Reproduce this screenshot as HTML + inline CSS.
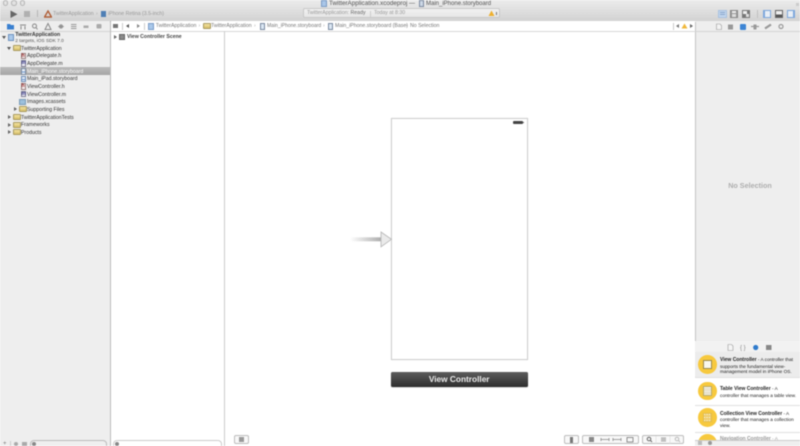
<!DOCTYPE html>
<html><head><meta charset="utf-8"><style>
*{box-sizing:border-box}
html,body{margin:0;padding:0;width:800px;height:446px;overflow:hidden;background:#fff}
#r{position:relative;width:800px;height:446px;overflow:hidden;filter:blur(.45px);font-family:"Liberation Sans",sans-serif;color:#333}
#r div{position:absolute;white-space:nowrap}
.t{font-size:5.2px;line-height:7px;color:#333}
.f{width:7.5px;height:6px;background:linear-gradient(#f3e3a0,#d9c06a);border:.5px solid #a89a60;border-radius:1px}
.d{width:5px;height:6.5px;background:#e8eef6;border:.5px solid #7a8aa0;font-size:5px;line-height:5px;text-align:center;font-weight:bold}
.tr{width:0;height:0;border-left:3px solid #666;border-top:2px solid transparent;border-bottom:2px solid transparent}
.tb{width:0;height:0;border-top:3px solid #555;border-left:2px solid transparent;border-right:2px solid transparent}
.lt{width:5.5px;height:5.5px;border-radius:50%;background:#e2e2e2;border:.6px solid #b5b5b5}
.btn{border:.8px solid #bdbdbd;border-radius:2px;background:#f8f8f8;height:9px;top:435px}
.v{width:.7px;background:#ccc}
.h{height:.7px;background:#e0e0e0}
.circ{border-radius:50%;background:#f7c93e}
.sq{background:#f4f1e4;border:.5px solid #b9ab6a}
.j{top:23px;color:#777}
.l{left:720px;font-size:4.7px;line-height:5.5px;color:#222}
.l b{font-size:5px}
</style></head><body><div id="r">
<!-- toolbar -->
<div style="left:0;top:0;width:800px;height:21px;background:linear-gradient(#ececec,#d2d2d2)"></div>
<div style="left:0;top:20.700px;width:800px;height:.7px;background:#aaa"></div>
<div class="lt" style="left:2.500px;top:0"></div><div class="lt" style="left:11px;top:0"></div><div class="lt" style="left:19.500px;top:0"></div>
<div style="left:796px;top:3px;width:3px;height:3px;background:#ccc"></div>
<svg style="position:absolute;left:9.500px;top:9.500px" width="9" height="9"><path d="M.5 .5L7.500 4.200L.5 8Z" fill="#666"/></svg>
<div style="left:24px;top:11px;width:6px;height:6px;background:#b0b0b0"></div>
<div class="v" style="left:37px;top:10px;height:7px;background:#b5b5b5"></div>
<svg style="position:absolute;left:44px;top:9.500px" width="8" height="8"><path d="M4 1L7.500 7H.5Z" fill="none" stroke="#b0603a" stroke-width="1.400"/></svg>
<div class="t" style="left:53px;top:11px;color:#999">TwitterApplication</div>
<div class="t" style="left:96px;top:11px;color:#aaa">›</div>
<div style="left:100.500px;top:11px;width:5.500px;height:6px;background:#4f7fb5"></div>
<div class="t" style="left:108px;top:11px;color:#999">iPhone Retina (3.5-inch)</div>
<!-- title -->
<div style="left:321px;top:0;width:6px;height:6.500px;background:#a9c6e8;border:.5px solid #7c9cc4"></div>
<div class="t" style="left:329px;top:0;color:#555;font-size:6.300px">TwitterApplication.xcodeproj</div>
<div class="t" style="left:409px;top:1px;color:#555;font-size:6px">—</div>
<div style="left:419px;top:0;width:4.500px;height:6.500px;background:#cdd8e6;border:.5px solid #7d8ba0"></div>
<div class="t" style="left:426px;top:1px;color:#555;font-size:6px">Main_iPhone.storyboard</div>
<!-- status -->
<div style="left:303px;top:8px;width:197px;height:10px;background:linear-gradient(#f1f1f1,#e6e6e6);border:.7px solid #c8c8c8;border-radius:2px"></div>
<div class="t" style="left:307px;top:10px;font-size:5.200px;color:#999">TwitterApplication: <span style="color:#666">Ready</span></div>
<div class="v" style="left:370px;top:10.500px;height:6px"></div>
<div class="t" style="left:374px;top:10px;font-size:5.200px;color:#999">Today at 8:30</div>
<svg style="position:absolute;left:488px;top:10px" width="10" height="7"><path d="M3.500 .5L6.500 6H.5Z" fill="#eeb030"/><rect x="8" y="2" width="1" height="3" fill="#777"/></svg>
<!-- right toolbar buttons -->
<div style="left:718.300px;top:10px;width:8.500px;height:7.500px;background:#c2d6ee;border:.5px solid #a9c2e0"></div>
<div style="left:720px;top:12px;width:5px;height:.6px;background:#89a6cc"></div><div style="left:720px;top:14px;width:5px;height:.6px;background:#89a6cc"></div>
<div style="left:730px;top:10px;width:8px;height:7.500px;background:#999;border:.5px solid #888"></div>
<div style="left:732px;top:11px;width:4px;height:2px;background:#eee"></div><div style="left:732px;top:14px;width:4px;height:2.500px;background:#ddd"></div>
<div style="left:742px;top:10px;width:8px;height:7.500px;background:#777"></div>
<div style="left:743px;top:11px;width:4px;height:2.500px;background:#eee"></div><div style="left:745.500px;top:14px;width:3.500px;height:2.500px;background:#ddd"></div>
<div class="v" style="left:756.500px;top:10px;height:7.500px;background:#c0c0c0"></div>
<div style="left:763px;top:10px;width:8px;height:7.500px;background:#e8eef6;border:.7px solid #7ea8dc;border-left-width:2.500px"></div>
<div style="left:775px;top:10px;width:8px;height:7.500px;background:linear-gradient(#eee 55%,#555 55%);border:.7px solid #666"></div>
<div style="left:786.700px;top:10px;width:8px;height:7.500px;background:#e8eef6;border:.7px solid #7ea8dc;border-right-width:2.500px"></div>
<!-- left sidebar -->
<div style="left:0;top:21.400px;width:110px;height:425px;background:#eeeeee"></div>
<div style="left:109.500px;top:22px;width:.8px;height:424px;background:#bbb"></div>
<div style="left:0;top:30.500px;width:110px;height:.7px;background:#d4d4d4"></div>
<svg style="position:absolute;left:6px;top:21.500px" width="100" height="9"><path d="M1 2H4L5 3H8V7.500H1Z" fill="#3a80d0"/><path d="M14 2.500H20V3.500H14ZM14.500 4H15.500V7.500H14.500ZM18.500 4H19.500V7.500H18.500Z" fill="#888"/><circle cx="28.500" cy="4" r="2" fill="none" stroke="#888"/><path d="M30 5.500L31.500 7.500" stroke="#888"/><path d="M42 1.500L45 7.500H39Z" fill="none" stroke="#888"/><circle cx="55" cy="4.500" r="2.200" fill="#999"/><path d="M52 4.500H58" stroke="#888" stroke-width=".6"/><path d="M65 2.500H70.500M65 4.500H70.500M65 6.500H70.500" stroke="#999" stroke-width=".9"/><rect x="77.500" y="3.500" width="5" height="2.500" fill="#aaa"/><rect x="90.500" y="2" width="5" height="4.500" rx="1" fill="#aaa"/></svg>
<!-- tree -->
<div class="tb" style="left:1.500px;top:36px"></div>
<div style="left:8px;top:33.500px;width:5.500px;height:7.500px;background:#a9c8ea;border:.5px solid #6f93c0"></div>
<div class="t" style="left:15.300px;top:31.800px;font-weight:bold;color:#333">TwitterApplication</div>
<div class="t" style="left:15.300px;top:37.500px;font-size:4.800px;color:#555">2 targets, iOS SDK 7.0</div>
<div class="tb" style="left:7px;top:46.500px"></div>
<div class="f" style="left:13.300px;top:45px"></div><div class="t" style="left:21px;top:45.500px">TwitterApplication</div>
<div class="d" style="left:20.500px;top:52.700px;background:#f5eeee;border-color:#9a8080;color:#9a3030">h</div><div class="t" style="left:27px;top:53.200px">AppDelegate.h</div>
<div class="d" style="left:20.500px;top:60.300px;background:#eeeef5;border-color:#808098;color:#303080">m</div><div class="t" style="left:27px;top:60.800px">AppDelegate.m</div>
<div style="left:0;top:67.300px;width:109.500px;height:7.700px;background:linear-gradient(#bbb,#a6a6a6)"></div>
<div class="d" style="left:20.500px;top:68px;background:linear-gradient(#e4ecf6 45%,#6f9ad0 45%,#6f9ad0 70%,#e4ecf6 70%)"></div><div class="t" style="left:27px;top:68.500px;color:#fff">Main_iPhone.storyboard</div>
<div class="d" style="left:20.500px;top:75.500px;background:linear-gradient(#e4ecf6 45%,#6f9ad0 45%,#6f9ad0 70%,#e4ecf6 70%);border-color:#6f8fb8"></div><div class="t" style="left:27px;top:76.200px">Main_iPad.storyboard</div>
<div class="d" style="left:20.500px;top:83.200px;background:#f5eeee;border-color:#9a8080;color:#9a3030">h</div><div class="t" style="left:27px;top:83.800px">ViewController.h</div>
<div class="d" style="left:20.500px;top:90.800px;background:#eeeef5;border-color:#808098;color:#303080">m</div><div class="t" style="left:27px;top:91.500px">ViewController.m</div>
<div style="left:19px;top:98.500px;width:7px;height:6.500px;background:#9cc0dc;border:.5px solid #7a9cb8"></div><div class="t" style="left:27px;top:99.200px">Images.xcassets</div>
<div class="tr" style="left:14px;top:107.300px"></div>
<div class="f" style="left:19px;top:106.300px"></div><div class="t" style="left:27px;top:106.800px">Supporting Files</div>
<div class="tr" style="left:8px;top:115px"></div>
<div class="f" style="left:13.300px;top:114px"></div><div class="t" style="left:21px;top:114.500px">TwitterApplicationTests</div>
<div class="tr" style="left:8px;top:122.700px"></div>
<div class="f" style="left:13.300px;top:121.700px"></div><div class="t" style="left:21px;top:122.200px">Frameworks</div>
<div class="tr" style="left:8px;top:130.300px"></div>
<div class="f" style="left:13.300px;top:129.300px"></div><div class="t" style="left:21px;top:129.800px">Products</div>
<!-- sidebar bottom -->
<div class="t" style="left:3px;top:440.500px;color:#777;font-size:6px">+</div>
<div class="v" style="left:10px;top:441px;height:5px"></div>
<div style="left:13.500px;top:441.500px;width:4.500px;height:4.500px;border-radius:50%;background:#aaa"></div>
<div style="left:22px;top:441.500px;width:4.500px;height:4.500px;background:#aaa"></div>
<div style="left:30px;top:440px;width:77px;height:10px;border:.7px solid #bbb;border-radius:4px;background:#efefef"></div>
<div style="left:32px;top:441.500px;width:4px;height:4px;border-radius:50%;background:#888"></div>
<!-- jump bar -->
<div style="left:110.500px;top:21.400px;width:584px;height:9.100px;background:#fff"></div>
<div style="left:110.500px;top:30.500px;width:584.500px;height:.8px;background:#d8d8d8"></div>
<div style="left:112.500px;top:24px;width:5px;height:4px;background:#777"></div>
<div class="v" style="left:121.700px;top:23px;height:7px"></div>
<svg style="position:absolute;left:125px;top:23px" width="18" height="7"><path d="M4 1V5L1 3Z" fill="#555"/><path d="M12 1V5L15 3Z" fill="#888"/></svg>
<div class="v" style="left:144px;top:23px;height:7px"></div>
<div style="left:148px;top:23px;width:5.500px;height:6.500px;background:#a9c8ea;border:.5px solid #7a9cc8"></div>
<div class="t j" style="left:155.700px">TwitterApplication</div>
<div class="t j" style="left:198.500px;color:#aaa">›</div>
<div class="f" style="left:203px;top:23.300px"></div>
<div class="t j" style="left:211px">TwitterApplication</div>
<div class="t j" style="left:254px;color:#aaa">›</div>
<div class="d" style="left:260px;top:23px;background:#dbe7f4"></div>
<div class="t j" style="left:267px;font-size:5px">Main_iPhone.storyboard</div>
<div class="t j" style="left:323px;color:#aaa">›</div>
<div class="d" style="left:328px;top:23px;background:#dbe7f4"></div>
<div class="t j" style="left:335px">Main_iPhone.storyboard (Base)</div>
<div class="t j" style="left:405.500px;color:#aaa">›</div>
<div class="t j" style="left:410px">No Selection</div>
<div class="v" style="left:673px;top:23px;height:7px"></div>
<svg style="position:absolute;left:675px;top:23px" width="19" height="7"><path d="M4 1V5L1 3Z" fill="#777"/><path d="M9.500 .5L12.500 5.500H6.500Z" fill="#f0b83c"/><path d="M15 1V5L18 3Z" fill="#666"/></svg>
<!-- outline -->
<div class="tr" style="left:114px;top:34.500px"></div>
<div style="left:119.300px;top:33.700px;width:6px;height:6px;background:#8a8a8a;border:.5px solid #666"></div>
<div class="t" style="left:127px;top:33.800px;font-weight:bold;color:#444">View Controller Scene</div>
<div style="left:224px;top:31px;width:.8px;height:415px;background:#ccc"></div>
<!-- bottom outline -->
<div style="left:113px;top:440px;width:109px;height:10px;border:.7px solid #ccc;border-radius:4px;background:#fff"></div>
<div style="left:115px;top:441.500px;width:4px;height:4px;border-radius:50%;background:#888"></div>
<!-- scene -->
<div style="left:390.700px;top:118px;width:137px;height:242px;background:#fff;border:.8px solid #cfcfcf;box-shadow:0 0 1px #ddd"></div>
<div style="left:513px;top:120.800px;width:10px;height:3.500px;background:#444;border-radius:1px"></div>
<div style="left:523px;top:121.800px;width:.7px;height:1.500px;background:#666"></div>
<div style="left:390.700px;top:371.700px;width:137px;height:15.600px;background:linear-gradient(#5c5c5c,#2e2e2e);border-radius:1.500px;box-shadow:0 .5px 1px #bbb"></div>
<div style="left:390.700px;top:371.700px;width:137px;height:15.600px;line-height:15.600px;text-align:center;color:#ececec;font-weight:bold;font-size:8.300px">View Controller</div>
<svg style="position:absolute;left:348px;top:229px" width="45" height="20"><defs><linearGradient id="a"><stop offset="0" stop-color="#fff"/><stop offset="1" stop-color="#aaa"/></linearGradient></defs><rect x="2" y="8.300" width="32" height="4" fill="url(#a)"/><path d="M33 3L43.500 10.300L33 17.800Z" fill="#eaeaea" stroke="#b5b5b5" stroke-width=".8"/></svg>
<!-- canvas bottom -->
<div class="btn" style="left:234px;width:14.700px"></div>
<div style="left:239px;top:437px;width:5px;height:5px;background:#999"></div>
<div class="btn" style="left:564.300px;width:14.400px"></div>
<div style="left:570px;top:436.500px;width:3px;height:6px;background:#777"></div>
<div class="btn" style="left:582.300px;width:56.400px"></div>
<svg style="position:absolute;left:584px;top:436px" width="54" height="8"><rect x="5" y="1" width="5" height="5" fill="#888"/><path d="M17 3.500H25M17 2V5M25 2V5M29 3.500H37M29 2V5M37 2V5" stroke="#888" stroke-width=".8" fill="none"/><rect x="43" y="1.500" width="6" height="4.500" fill="none" stroke="#777" stroke-width=".8"/></svg>
<div class="btn" style="left:642.300px;width:42px"></div>
<svg style="position:absolute;left:643px;top:436px" width="41" height="8"><circle cx="6" cy="3" r="1.800" fill="none" stroke="#666"/><path d="M7.500 4.500L9 6" stroke="#666"/><path d="M18 2H23M18 3.500H23M18 5H23" stroke="#888" stroke-width=".8"/><circle cx="34" cy="3" r="1.800" fill="none" stroke="#bbb"/><path d="M35.500 4.500L37 6" stroke="#bbb"/><path d="M13 0V8M27 0V8" stroke="#ddd" stroke-width=".6"/></svg>
<!-- right panel -->
<div style="left:695px;top:21.400px;width:105px;height:425px;background:#eeeeee"></div>
<div style="left:694.500px;top:22px;width:.9px;height:424px;background:#c4c4c4"></div>
<div style="left:695px;top:30.500px;width:105px;height:.7px;background:#d4d4d4"></div>
<svg style="position:absolute;left:712px;top:21.500px" width="80" height="9"><path d="M4.500 2H8L9.500 3.500V7.500H4.500Z" fill="#f3f3f3" stroke="#999" stroke-width=".6"/><rect x="16" y="2.500" width="5" height="5" fill="#999"/><rect x="28" y="2" width="6" height="6" rx="1" fill="#3d85d4"/><path d="M39 4.500H47" stroke="#999" stroke-width="1.200"/><rect x="41.500" y="2.500" width="3" height="5" fill="#999"/><path d="M53 6.500L59 2.500" stroke="#999" stroke-width="2.200"/><circle cx="69" cy="4.500" r="2" fill="none" stroke="#999" stroke-width="1.200"/></svg>
<div class="t" style="left:697.500px;top:181px;width:105px;text-align:center;font-size:7.200px;line-height:9px;font-weight:bold;color:#aeaeae">No Selection</div>
<!-- library tabs -->
<div style="left:695.400px;top:341px;width:105px;height:10.700px;background:#f2f2f2"></div>
<div style="left:695.400px;top:351.500px;width:105px;height:.7px;background:#c8c8c8"></div>
<svg style="position:absolute;left:695px;top:342.500px" width="105" height="9"><path d="M33 1.500H36.500L38 3V7.500H33Z" fill="#f5f5f5" stroke="#999" stroke-width=".6"/><text x="45" y="6.500" font-size="6" font-family="Liberation Sans" fill="#888">{ }</text><circle cx="60.700" cy="4.500" r="2.600" fill="#2f7bcc"/><rect x="71" y="2" width="5.500" height="5" fill="#888"/></svg>
<!-- library -->
<div style="left:695.400px;top:352px;width:104.600px;height:88px;background:#fff"></div>
<div style="left:695.400px;top:352px;width:104.600px;height:24.500px;background:#ececec"></div>
<div class="h" style="left:695.400px;top:376.500px;width:104.600px"></div>
<div class="h" style="left:695.400px;top:405px;width:104.600px"></div>
<div class="h" style="left:695.400px;top:432px;width:104.600px"></div>
<div class="circ" style="left:698px;top:355px;width:18.700px;height:18.700px"></div>
<div class="sq" style="left:702.500px;top:359.500px;width:9.700px;height:9.700px;background:#f9f7ee;border:.7px solid #9a8a50"></div>
<div class="t l" style="top:357px"><b>View Controller</b> - A controller that<br>supports the fundamental view-<br>management model in iPhone OS.</div>
<div class="circ" style="left:698px;top:381.700px;width:18.700px;height:18.700px"></div>
<div class="sq" style="left:702.500px;top:386.200px;width:9.700px;height:9.700px;background:repeating-linear-gradient(#f4f1e4 0 1.300px,#cfc8a8 1.300px 1.800px)"></div>
<div class="t l" style="top:386px"><b>Table View Controller</b> - A<br>controller that manages a table view.</div>
<div class="circ" style="left:698px;top:408px;width:18.700px;height:18.700px"></div>
<div class="sq" style="left:702.500px;top:412.500px;width:9.700px;height:9.700px;background:#eecb68;border-color:#e0bb50"></div>
<svg style="position:absolute;left:703px;top:413px" width="9" height="9"><path d="M1 1.500H8M1 4.500H8M1 7.500H8" stroke="#f8f2d8" stroke-width="1.300" stroke-dasharray="1.300 1.100"/></svg>
<div class="t l" style="top:410.500px"><b>Collection View Controller</b> - A<br>controller that manages a collection<br>view.</div>
<div class="circ" style="left:698px;top:434px;width:18.700px;height:18.700px"></div>
<div class="t l" style="top:436px;color:#999"><b>Navigation Controller</b> - A</div>
<!-- right bottom -->
<div style="left:695.400px;top:439.500px;width:104.600px;height:7px;background:#efefef;border-top:.7px solid #ccc"></div>
<div style="left:698px;top:441px;width:4px;height:4px;background:#bbb"></div>
<div style="left:708px;top:441px;width:4px;height:4px;border-radius:50%;background:#999"></div>
</div></body></html>
